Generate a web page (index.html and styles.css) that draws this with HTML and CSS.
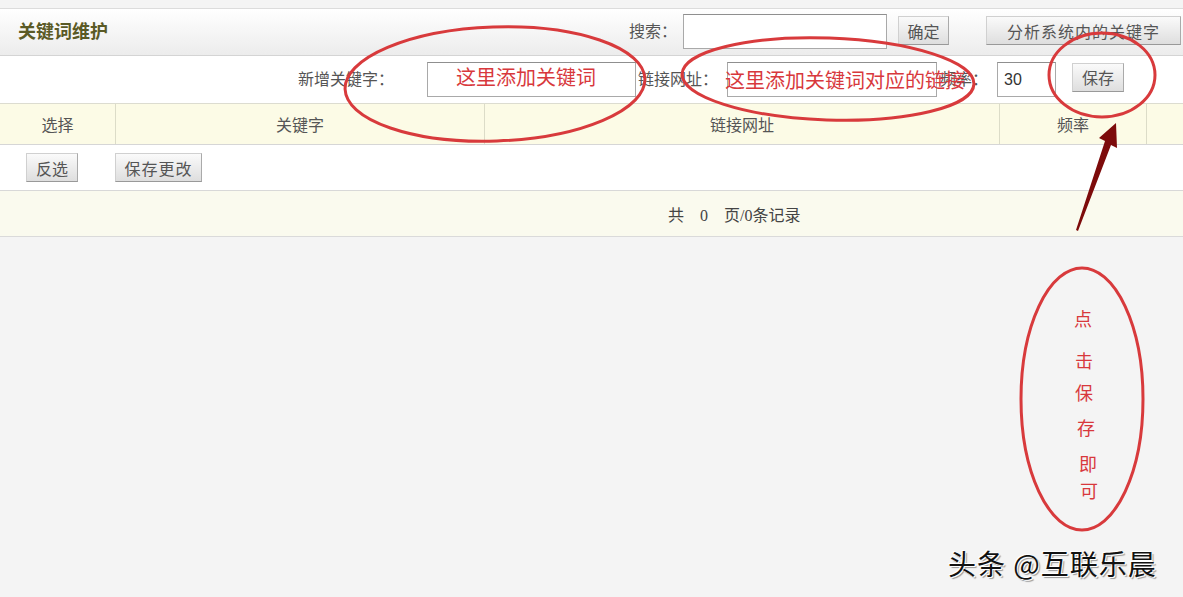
FILE: index.html
```html
<!DOCTYPE html>
<html lang="zh-CN">
<head>
  <meta charset="UTF-8">
  <title>关键词维护</title>
  <link rel="stylesheet" href="styles.css">
</head>
<body>
  <div class="page">
    <div class="panel">
      <div class="titlebar">
        <div class="title">关键词维护</div>
        <div class="search">
          <span class="lbl">搜索：</span>
          <input type="text" class="search-input">
          <button class="btn btn-ok">确定</button>
          <button class="btn btn-analyze">分析系统内的关键字</button>
        </div>
      </div>
      <div class="addbar">
        <span class="lbl">新增关键字：</span>
        <input type="text" class="kw-input">
        <span class="lbl lbl-url">链接网址：</span>
        <input type="text" class="url-input">
        <span class="lbl lbl-freq">频率：</span>
        <input type="text" class="freq-input" value="30">
        <button class="btn btn-save">保存</button>
      </div>
      <div class="thead">
        <div class="th th-sel">选择</div>
        <div class="th th-kw">关键字</div>
        <div class="th th-url">链接网址</div>
        <div class="th th-freq">频率</div>
        <div class="th th-last"></div>
      </div>
      <div class="actions">
        <button class="btn btn-invert">反选</button>
        <button class="btn btn-commit">保存更改</button>
      </div>
      <div class="pager">共 0 页/0条记录</div>
    </div>

    <!-- annotations drawn over the screenshot -->
    <svg class="marks" width="1183" height="597" viewBox="0 0 1183 597">
      <g fill="none" stroke="#d83a3c" stroke-width="3">
        <ellipse cx="495" cy="84" rx="150" ry="57" transform="rotate(-2 495 84)"/>
        <ellipse cx="828" cy="79" rx="146" ry="41" transform="rotate(2 828 79)"/>
        <ellipse cx="1102" cy="75" rx="53" ry="42"/>
        <ellipse cx="1082" cy="399" rx="61" ry="131"/>
      </g>
      <polygon points="1116,123 1117,148 1111,145 1078,231 1076,230 1105,141 1099,138" fill="#7d0b0b"/>
    </svg>
    <div class="note note-kw">这里添加关键词</div>
    <div class="note note-url">这里添加关键词对应的链接</div>
    <div class="vnote">
      <span>点</span>
      <span>击</span>
      <span>保</span>
      <span>存</span>
      <span>即</span>
      <span>可</span>
    </div>
    <div class="watermark">头条 @互联乐晨</div>
  </div>
</body>
</html>
```

FILE: styles.css
```css
body {
  margin: 0;
  background: #f4f4f4;
  font-family: "Liberation Serif", "Noto Sans CJK SC", serif;
  color: #555;
}
.page {
  position: relative;
  width: 1183px;
  height: 597px;
  overflow: hidden;
  padding-top: 8px;
  box-sizing: border-box;
}
.panel {
  border-top: 1px solid #dcdcdc;
}
.titlebar {
  height: 46px;
  display: flex;
  align-items: center;
  justify-content: space-between;
  background: linear-gradient(#ffffff, #ececec);
  border-bottom: 1px solid #d4d4d4;
}
.title {
  padding-left: 18px;
  margin-top: -5px;
  font-size: 18px;
  font-weight: bold;
  color: #5a5a26;
}
.search {
  display: flex;
  align-items: center;
}
.search .lbl {
  margin-top: -5px;
}
.lbl {
  font-size: 16px;
  color: #555;
}
input {
  box-sizing: border-box;
  border: 1px solid #a9a9a9;
  border-top-color: #8f8f8f;
  background: #fff;
  font-family: "Liberation Sans", "Noto Sans CJK SC", sans-serif;
  font-size: 16px;
  padding: 0 8px;
  color: #333;
}
.search-input {
  width: 204px;
  height: 35px;
  margin-left: 6px;
  margin-top: -2px;
}
.btn {
  box-sizing: border-box;
  height: 29px;
  padding: 0 7px;
  font-family: "Liberation Serif", "Noto Sans CJK SC", serif;
  font-size: 16px;
  color: #555;
  background: linear-gradient(#fafafa, #dedede);
  border: 1px solid #d0d0d0;
  border-right-color: #aaa;
  border-bottom-color: #999;
  cursor: pointer;
}
.btn-ok {
  margin-left: 11px;
  width: 51px;
  margin-top: -3px;
}
.btn-analyze {
  margin-left: 37px;
  margin-right: 2px;
  width: 195px;
  margin-top: -3px;
  letter-spacing: 1px;
}
.addbar {
  height: 47px;
  display: flex;
  align-items: center;
  padding-left: 298px;
  background: #fff;
}
.addbar .lbl {
  margin-top: -3px;
}
.kw-input {
  width: 209px;
  height: 35px;
  margin-left: 33px;
}
.addbar .lbl-url {
  margin-left: 2px;
}
.url-input {
  width: 210px;
  height: 35px;
  margin-left: 9px;
}
.addbar .lbl-freq {
  margin-left: 3px;
}
.freq-input {
  width: 59px;
  height: 35px;
  margin-left: 9px;
  padding: 0 6px;
}
.btn-save {
  margin-left: 16px;
  width: 52px;
  margin-top: -5px;
}
.thead {
  display: flex;
  height: 40px;
  background: #fcfbe6;
  border-top: 1px solid #dcdcd0;
  border-bottom: 1px solid #d6d6d6;
}
.th {
  display: flex;
  align-items: center;
  justify-content: center;
  font-size: 16px;
  color: #555;
  border-right: 1px solid #dcdcc8;
}
.th-sel { width: 115px; }
.th-kw { width: 368px; }
.th-url { width: 514px; }
.th-freq { width: 146px; }
.th-last { flex: 1; border-right: none; }
.actions {
  height: 45px;
  display: flex;
  align-items: center;
  gap: 37px;
  padding-left: 26px;
  background: #fff;
  border-bottom: 1px solid #d8d8d8;
}
.btn-invert {
  width: 52px;
}
.btn-commit {
  width: 87px;
  letter-spacing: 1px;
}
.pager {
  height: 45px;
  display: flex;
  align-items: center;
  padding-left: 668px;
  font-size: 16px;
  color: #444;
  word-spacing: 12px;
  background: #fafaee;
  border-bottom: 1px solid #dadada;
}
.marks {
  position: absolute;
  left: 0;
  top: 0;
  pointer-events: none;
}
.note {
  position: absolute;
  font-family: "Noto Sans CJK SC", sans-serif;
  font-size: 20px;
  line-height: 24px;
  color: #d8383c;
  white-space: nowrap;
}
.note-kw {
  left: 456px;
  top: 65px;
}
.note-url {
  left: 725px;
  top: 68px;
}
.vnote {
  position: absolute;
  left: 1070px;
  top: 307px;
  width: 30px;
  display: flex;
  flex-direction: column;
  align-items: center;
  font-family: "Noto Sans CJK SC", sans-serif;
  font-size: 18px;
  line-height: 22px;
  color: #d8383c;
}
.vnote span:nth-child(1) { margin-left: -4px; }
.vnote span:nth-child(2) { margin-top: 20px; margin-left: -2px; }
.vnote span:nth-child(3) { margin-top: 10px; margin-left: -2px; }
.vnote span:nth-child(4) { margin-top: 13px; margin-left: 2px; }
.vnote span:nth-child(5) { margin-top: 14px; margin-left: 6px; }
.vnote span:nth-child(6) { margin-top: 5px; margin-left: 8px; }
.watermark {
  position: absolute;
  left: 948px;
  top: 545px;
  font-family: "Noto Sans CJK SC", sans-serif;
  font-size: 28px;
  line-height: 36px;
  letter-spacing: 1px;
  color: #111;
  text-shadow: 1px 1px 0 #fff, -1px -1px 0 #fff, 2px 2px 1px #999;
}
```
